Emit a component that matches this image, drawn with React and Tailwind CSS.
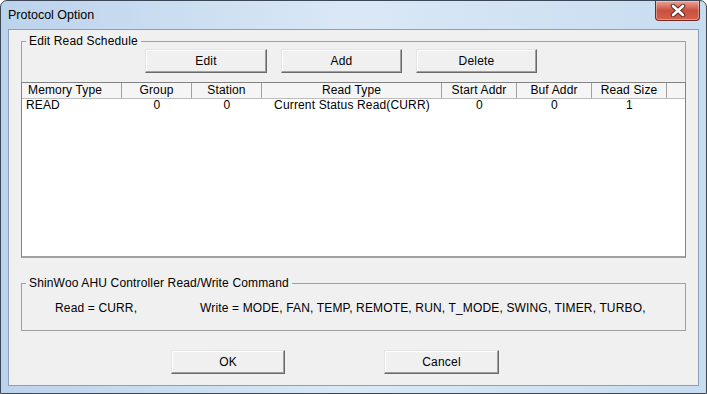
import React from "react";

const font = { fontFamily: '"Liberation Sans", Arial, sans-serif' };

const columns = [
  { label: "Memory Type", w: "w-[100px]", align: "text-left pl-[6px]" },
  { label: "Group", w: "w-[70px]", align: "text-center" },
  { label: "Station", w: "w-[70px]", align: "text-center" },
  { label: "Read Type", w: "w-[180px]", align: "text-center" },
  { label: "Start Addr", w: "w-[75px]", align: "text-center" },
  { label: "Buf Addr", w: "w-[75px]", align: "text-center" },
  { label: "Read Size", w: "w-[75px]", align: "text-center" },
];

const rows = [["READ", "0", "0", "Current Status Read(CURR)", "0", "0", "1"]];

const Button = ({ children, className = "" }) => (
  <button
    className={`h-[24px] bg-[#f0f0f0] border border-t-[#e3e3e3] border-l-[#e3e3e3] border-r-[#696969] border-b-[#696969] shadow-[inset_-1px_-1px_0_#a0a0a0,inset_1px_1px_0_#ffffff] text-[12px] tracking-[0.2px] text-black leading-none ${className}`}
  >
    {children}
  </button>
);

const GroupLabel = ({ children }) => (
  <span className="absolute left-[4px] top-[-8px] bg-[#f0f0f0] px-[3px] text-[12px] leading-[14px] text-black">
    {children}
  </span>
);

export default function App() {
  return (
    <div className="w-[707px] h-[394px] overflow-hidden bg-white" style={font}>
      <div className="relative w-[707px] h-[394px] rounded-t-[7px] border border-[#3b4756] bg-gradient-to-r from-[#bcd3ec] via-[#dae8f6] to-[#c8dcf0] flex flex-col">
        {/* title bar */}
        <div className="h-[28px] flex items-center pl-[7px] pt-[1px] text-[12.5px] text-black">
          Protocol Option
        </div>
        <div className="absolute top-0 right-[6px] w-[45px] h-[20px] rounded-b-[4px] border border-t-0 border-[#6e2a22] bg-gradient-to-b from-[#e8a397] via-[#c9503f] to-[#d5604c] flex items-center justify-center shadow-[inset_0_0_0_1px_rgba(255,255,255,0.35)]">
          <svg width="16" height="13" viewBox="0 0 16 13">
            <path d="M3 2 L13 11 M13 2 L3 11" stroke="#5a2b26" strokeWidth="4.5" strokeLinecap="round" />
            <path d="M3 2 L13 11 M13 2 L3 11" stroke="#ffffff" strokeWidth="2.6" strokeLinecap="round" />
          </svg>
        </div>

        {/* client area */}
        <div className="mx-[7px] h-[357px] border border-[#8aa0ba] bg-[#f0f0f0] px-[12px] flex flex-col text-[12px] tracking-[0.15px] text-black">
          {/* Edit Read Schedule */}
          <div className="relative mt-[11px] h-[217px] border border-[#a0a0a0] flex flex-col">
            <GroupLabel>Edit Read Schedule</GroupLabel>
            <div className="flex gap-[14px] pl-[123px] pt-[7px]">
              <Button className="w-[122px]">Edit</Button>
              <Button className="w-[121px]">Add</Button>
              <Button className="w-[121px]">Delete</Button>
            </div>
            <div className="-mx-px -mb-px mt-[9px] flex-1 border border-[#828282] border-b-2 border-b-[#a0a0a0] bg-white flex flex-col">
              <div className="flex h-[16px] bg-[#f5f5f5] border-b border-[#bdbdbd]">
                {columns.map((c) => (
                  <div
                    key={c.label}
                    className={`${c.w} shrink-0 ${c.align} border-r border-[#a0a0a0] leading-[15px] whitespace-nowrap`}
                  >
                    {c.label}
                  </div>
                ))}
                <div className="flex-1" />
              </div>
              {rows.map((r, i) => (
                <div key={i} className="flex h-[14px] leading-[13px]">
                  {r.map((v, j) => (
                    <div
                      key={j}
                      className={`${columns[j].w} shrink-0 whitespace-nowrap ${
                        j === 0 ? "text-left pl-[4px]" : "text-center"
                      }`}
                    >
                      {v}
                    </div>
                  ))}
                </div>
              ))}
            </div>
          </div>

          {/* Read/Write Command */}
          <div className="relative mt-[25px] h-[48px] border border-[#a0a0a0]">
            <GroupLabel>ShinWoo AHU Controller Read/Write Command</GroupLabel>
            <div className="flex pl-[33px] pt-[17px] leading-[14px] whitespace-nowrap">
              <span className="w-[145px]">Read = CURR,</span>
              <span>Write = MODE, FAN, TEMP, REMOTE, RUN, T_MODE, SWING, TIMER, TURBO,</span>
            </div>
          </div>

          {/* OK / Cancel */}
          <div className="flex mt-[19px] pl-[150px]">
            <Button className="w-[114px]">OK</Button>
            <Button className="w-[115px] ml-[99px]">Cancel</Button>
          </div>
        </div>
      </div>
    </div>
  );
}
